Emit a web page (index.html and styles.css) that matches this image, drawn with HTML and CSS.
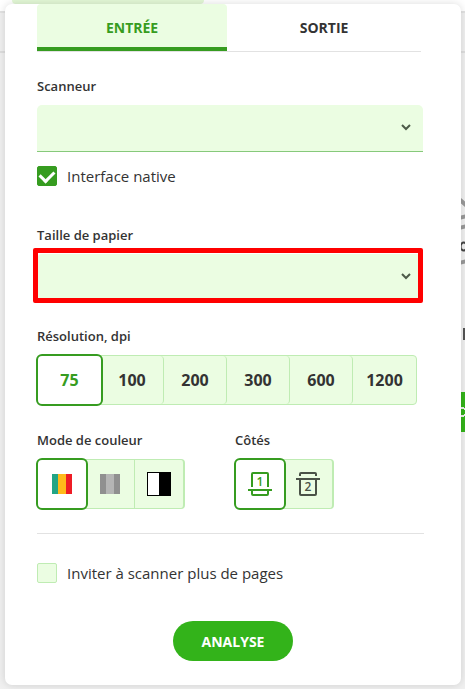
FILE: index.html
```html
<!DOCTYPE html>
<html lang="fr">
<head>
  <meta charset="UTF-8" />
  <meta name="viewport" content="width=device-width, initial-scale=1.0" />
  <title>Numérisation</title>
  <link rel="stylesheet" href="styles.css">
</head>
<body>
  <!-- Page derrière la fenêtre -->
  <div class="backdrop" aria-hidden="true">
    <div class="topbar"><div class="topbar-tab"></div></div>
    <div class="toolbar"></div>
    <div class="workspace">
      <svg class="drawing" width="4" height="70" viewBox="0 0 4 70" fill="none">
        <path d="M-2 1L6 8M-2 20L6 18M-2 30L6 28M-2 65L6 63" stroke="#999" stroke-width="4" />
        <path d="M5 46a3 4 0 1 0 0 5" stroke="#444" stroke-width="2" />
        <path d="M0 47v4" stroke="#777" stroke-width="1" />
      </svg>
      <div class="mark"></div>
      <div class="strip"><svg width="4" height="40" viewBox="0 0 4 40" fill="none"><path d="M0 16h3M0 24h3M4 16v2M4 22v2" stroke="#eee" stroke-width="2" /></svg></div>
    </div>
  </div>

  <form class="dialog">
    <div class="settings">
      <div class="tabs">
        <button type="button" class="tab active">ENTRÉE</button>
        <button type="button" class="tab">SORTIE</button>
      </div>

      <div class="field scanner">
        <label class="title" for="scanner">Scanneur</label>
        <div class="select-box">
          <select id="scanner"></select>
          <svg class="arrow" width="12" height="8" viewBox="0 0 12 8"><path d="M2 2l4 4 4-4" /></svg>
        </div>
      </div>

      <label class="check native"><input type="checkbox" checked />Interface native</label>

      <div class="field paper">
        <label class="title" for="paper">Taille de papier</label>
        <div class="select-box highlight">
          <select id="paper"></select>
          <svg class="arrow" width="12" height="8" viewBox="0 0 12 8"><path d="M2 2l4 4 4-4" /></svg>
        </div>
      </div>

      <fieldset class="field">
        <legend class="title">Résolution, dpi</legend>
        <div class="options">
          <label class="option"><input type="radio" name="dpi" checked />75</label>
          <label class="option"><input type="radio" name="dpi" />100</label>
          <label class="option"><input type="radio" name="dpi" />200</label>
          <label class="option"><input type="radio" name="dpi" />300</label>
          <label class="option"><input type="radio" name="dpi" />600</label>
          <label class="option"><input type="radio" name="dpi" />1200</label>
        </div>
      </fieldset>

      <div class="row">
        <fieldset class="field">
          <legend class="title">Mode de couleur</legend>
          <div class="options small">
            <label class="option">
              <input type="radio" name="color" aria-label="Couleur" checked />
              <svg width="20" height="20" viewBox="0 0 20 20"><path fill="#22a585" d="M0 0h6v20H0z" /><path fill="#ffb91a" d="M6 0h8v20H6z" /><path fill="#ee1c25" d="M14 0h6v20h-6z" /></svg>
            </label>
            <label class="option">
              <input type="radio" name="color" aria-label="Niveaux de gris" />
              <svg width="20" height="20" viewBox="0 0 20 20"><path fill="#909090" d="M0 0h20v20H0z" /><path fill="#b5b5b5" d="M6 0h8v20H6z" /></svg>
            </label>
            <label class="option">
              <input type="radio" name="color" aria-label="Noir et blanc" />
              <svg width="24" height="24" viewBox="0 0 24 24"><path d="M0 0h24v24H0z" /><path fill="#fff" d="M1 1h11v22H1z" /></svg>
            </label>
          </div>
        </fieldset>

        <fieldset class="field">
          <legend class="title">Côtés</legend>
          <div class="options small">
            <label class="option">
              <input type="radio" name="sides" aria-label="Recto" checked />
              <svg class="side" width="24" height="24" viewBox="0 0 24 24">
                <path d="M4 15V2q0-1 1-1h14q1 0 1 1v13M0 18h24M4 18v4q0 1 1 1h14q1 0 1-1v-4" />
                <text x="12" y="14">1</text>
              </svg>
            </label>
            <label class="option">
              <input type="radio" name="sides" aria-label="Recto verso" />
              <svg class="side" width="24" height="24" viewBox="0 0 24 24">
                <path d="M4 4V2q0-1 1-1h14q1 0 1 1v2M0 7h24M4 7v15q0 1 1 1h14q1 0 1-1V7" />
                <text x="12" y="19">2</text>
              </svg>
            </label>
          </div>
        </fieldset>
      </div>

      <hr />

      <label class="check"><input type="checkbox" />Inviter à scanner plus de pages</label>
    </div>

    <button type="submit" class="scan">ANALYSE</button>
  </form>
</body>
</html>
```

FILE: styles.css
```css
* {
  box-sizing: border-box;
}

body {
  margin: 0;
  min-height: 100vh;
  display: grid;
  grid-template-columns: 100%;
  font-family: "Open Sans", "Noto Sans", sans-serif;
  color: #333;
  background: #f0f0f0;
}

/* Arrière-plan */
.backdrop,
.dialog {
  grid-area: 1 / 1;
}
.backdrop {
  overflow: hidden;
}
.topbar {
  height: 13px;
  padding-left: 12px;
  background: #fff;
  border-bottom: 2px solid #e2e2e2;
}
.topbar-tab {
  width: 192px;
  height: 4px;
  border-radius: 0 0 12px 12px;
  background: #e3f8d6;
}
.toolbar {
  height: 40px;
  border-bottom: 2px solid #dedede;
}
.workspace {
  display: flex;
  flex-direction: column;
  align-items: flex-end;
  padding-top: 145px;
}
.mark {
  width: 2px;
  height: 12px;
  margin-top: 60px;
  background: #555;
}
.strip {
  width: 4px;
  height: 40px;
  margin-top: 52px;
  background: #33b31a;
}

/* Fenêtre */
.dialog {
  position: relative;
  align-self: start;
  margin: 4px 4px 4px 5px;
  padding: 0 32px 24px;
  border-radius: 7px;
  background: #fff;
  box-shadow: 0 0 8px rgba(0, 0, 0, 0.14);
}
.settings {
  padding-right: 6px;
}

.tabs {
  display: flex;
  margin-right: 2px;
  border-bottom: 1px solid #e2e2e2;
}
.tab {
  flex: 1;
  height: 47px;
  padding: 0;
  border: none;
  background: none;
  font: bold 14px "Open Sans", sans-serif;
  color: #333;
}
.tab.active {
  flex: 0 0 49.5%;
  border-bottom: 4px solid #369c20;
  border-radius: 4px 4px 0 0;
  padding-top: 4px;
  background: #ebfde2;
  color: #369c20;
}

.field {
  margin: 25px 0 0;
  padding: 0;
  border: none;
  min-width: 0;
}
.field.scanner {
  margin-top: 24px;
}
.field.paper {
  margin-top: 39px;
}
.title {
  display: block;
  padding: 0;
  margin-bottom: 9px;
  font-size: 13px;
  font-weight: 600;
  line-height: 20px;
}

.select-box {
  position: relative;
}
select {
  display: block;
  width: 100%;
  height: 47px;
  appearance: none;
  border: none;
  border-bottom: 1px solid #87c97b;
  border-radius: 5px 5px 0 0;
  background: #ebfde2;
}
.arrow {
  position: absolute;
  right: 11px;
  top: 18px;
  fill: none;
  stroke: #4d5b49;
  stroke-width: 2;
}
.highlight::after {
  content: "";
  position: absolute;
  inset: -6px 0 -2px -4px;
  border: 5px solid #f00;
  border-radius: 2px;
}

.check {
  display: flex;
  align-items: center;
  gap: 10px;
  font-size: 15px;
  line-height: 20px;
}
.check input {
  appearance: none;
  display: grid;
  place-items: center;
  width: 20px;
  height: 20px;
  margin: 0;
  border: 1px solid #bfecb3;
  border-radius: 2px;
  background: #ebfde2;
}
.check input:checked {
  border-color: #369c20;
  background: #369c20;
}
.check input:checked::before {
  content: "";
  width: 11px;
  height: 7px;
  margin-bottom: 3px;
  border: solid #fff;
  border-width: 0 0 3px 3px;
  transform: rotate(-45deg);
}
.native {
  margin-top: 14px;
}

/* Groupes de choix */
.options {
  display: flex;
  width: fit-content;
  height: 50px;
  border: 1px solid #bfecb3;
  border-radius: 4px;
  background: #ebfde2;
}
.option {
  display: flex;
  align-items: center;
  justify-content: center;
  width: 63px;
  border-right: 1px solid #bfecb3;
  border-radius: 0 4px 4px 0;
  font-size: 16px;
  font-weight: bold;
}
.option:last-child {
  border-right: none;
}
.option input {
  position: absolute;
  opacity: 0;
}
.option:has(input:checked) {
  position: relative;
  width: 67px;
  margin: -2px;
  border: 2px solid #369c20;
  border-radius: 6px;
  background: #fff;
  color: #369c20;
}
.small {
  border-right-width: 2px;
}
.small .option {
  width: 49px;
  border-radius: 0;
}
.small .option:last-child {
  width: 48px;
}
.small .option:has(input:checked) {
  width: 52px;
  border-radius: 6px;
}

.row {
  display: flex;
  gap: 50px;
}
.side {
  fill: none;
  stroke: currentColor;
  stroke-width: 2;
}
.option:not(:has(input:checked)) .side {
  color: #4a5247;
}
.side text {
  fill: currentColor;
  stroke: none;
  text-anchor: middle;
  font: 600 12px "Open Sans", sans-serif;
}

hr {
  margin: 24px -1px 29px 0;
  border: none;
  border-top: 1px solid #e2e2e2;
}

.scan {
  display: block;
  width: 120px;
  height: 40px;
  margin: 38px auto 0;
  border: none;
  border-radius: 20px;
  background: #33b31a;
  color: #fff;
  font: bold 14px "Open Sans", sans-serif;
}
```
